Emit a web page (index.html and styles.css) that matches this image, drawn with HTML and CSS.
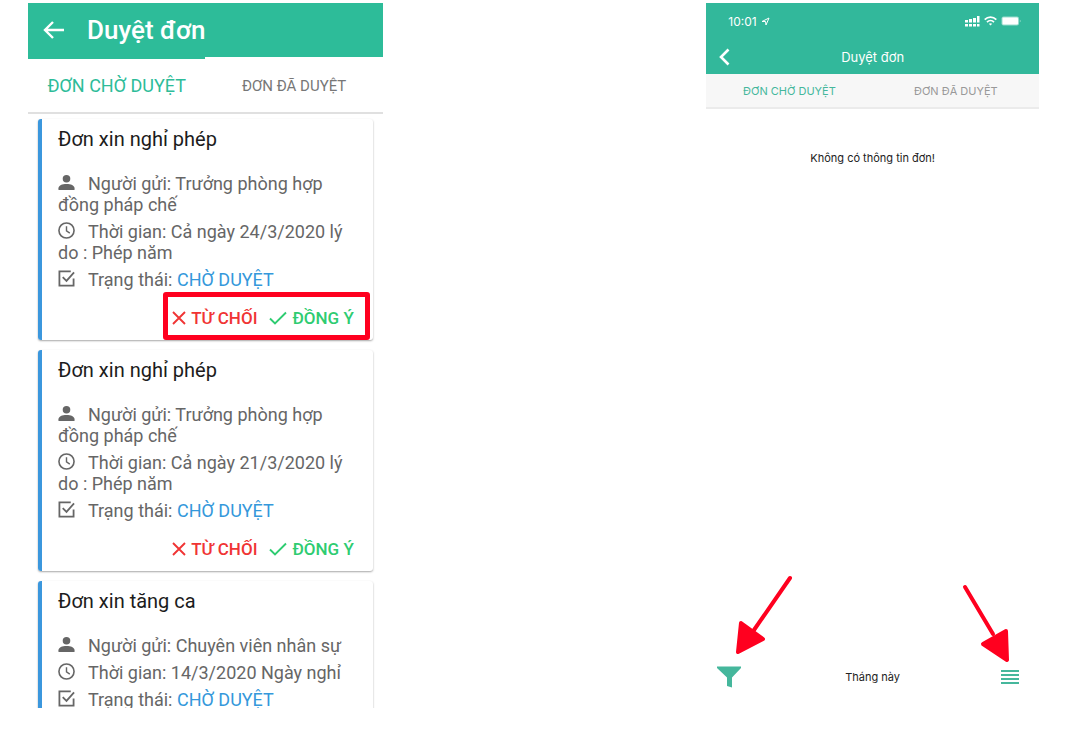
FILE: index.html
```html
<!DOCTYPE html>
<html lang="vi">
<head>
  <meta charset="UTF-8" />
  <meta name="viewport" content="width=device-width, initial-scale=1.0"/>
  <title>Duyệt đơn</title>
  <link rel="stylesheet" href="styles.css">
</head>
<body>
  <!-- Shared icons -->
  <svg class="icon-defs" width="0" height="0" aria-hidden="true">
    <symbol id="icon-user" viewBox="0 0 18 18">
      <circle cx="9" cy="5" r="4" fill="currentColor"/>
      <path d="M.5 17v-2c0-3 4-4.500 8.500-4.500s8.500 1.500 8.500 4.500v2z" fill="currentColor"/>
    </symbol>
    <symbol id="icon-clock" viewBox="0 0 18 18">
      <circle cx="9" cy="9" r="8" fill="none" stroke="currentColor" stroke-width="1.700"/>
      <path d="M9 4.500v5l3.500 2.200" fill="none" stroke="currentColor" stroke-width="1.500"/>
    </symbol>
    <symbol id="icon-checkbox" viewBox="0 0 18 18">
      <path d="M13.500 1.500H1.500v15h15V9" fill="none" stroke="currentColor" stroke-width="1.900"/>
      <path d="M5 7.500l4 4L17 2.500" fill="none" stroke="currentColor" stroke-width="1.900"/>
    </symbol>
    <symbol id="icon-close" viewBox="0 0 14 14">
      <path d="M1 1l12 12M13 1L1 13" fill="none" stroke="currentColor" stroke-width="1.900"/>
    </symbol>
    <symbol id="icon-check" viewBox="0 0 18 14">
      <path d="M1 7.500l5 5L17 1.500" fill="none" stroke="currentColor" stroke-width="1.900"/>
    </symbol>
  </svg>

  <main class="screens">
    <!-- Android -->
    <section class="phone android">
      <header class="app-bar">
        <button class="icon-btn" aria-label="Quay lại">
          <svg width="22" height="20" viewBox="0 0 22 20"><path d="M21 10H2M10 2L2 10l8 8" fill="none" stroke="#fff" stroke-width="2.400"/></svg>
        </button>
        <h1>Duyệt đơn</h1>
      </header>
      <nav class="tabs">
        <button class="tab active">ĐƠN CHỜ DUYỆT</button>
        <button class="tab">ĐƠN ĐÃ DUYỆT</button>
      </nav>

      <div class="card-list">
        <article class="card">
          <h2>Đơn xin nghỉ phép</h2>
          <p><svg class="icon"><use href="#icon-user"/></svg>Người gửi: Trưởng phòng hợp đồng pháp chế</p>
          <p><svg class="icon"><use href="#icon-clock"/></svg>Thời gian: Cả ngày 24/3/2020 lý do : Phép năm</p>
          <p><svg class="icon"><use href="#icon-checkbox"/></svg>Trạng thái: <span class="status">CHỜ DUYỆT</span></p>
          <div class="actions">
            <button class="reject"><svg width="14" height="14"><use href="#icon-close"/></svg>TỪ CHỐI</button>
            <button class="approve"><svg width="18" height="14"><use href="#icon-check"/></svg>ĐỒNG Ý</button>
            <span class="highlight"></span>
          </div>
        </article>

        <article class="card">
          <h2>Đơn xin nghỉ phép</h2>
          <p><svg class="icon"><use href="#icon-user"/></svg>Người gửi: Trưởng phòng hợp đồng pháp chế</p>
          <p><svg class="icon"><use href="#icon-clock"/></svg>Thời gian: Cả ngày 21/3/2020 lý do : Phép năm</p>
          <p><svg class="icon"><use href="#icon-checkbox"/></svg>Trạng thái: <span class="status">CHỜ DUYỆT</span></p>
          <div class="actions">
            <button class="reject"><svg width="14" height="14"><use href="#icon-close"/></svg>TỪ CHỐI</button>
            <button class="approve"><svg width="18" height="14"><use href="#icon-check"/></svg>ĐỒNG Ý</button>
          </div>
        </article>

        <article class="card">
          <h2>Đơn xin tăng ca</h2>
          <p><svg class="icon"><use href="#icon-user"/></svg>Người gửi: Chuyên viên nhân sự</p>
          <p><svg class="icon"><use href="#icon-clock"/></svg>Thời gian: 14/3/2020 Ngày nghỉ</p>
          <p><svg class="icon"><use href="#icon-checkbox"/></svg>Trạng thái: <span class="status">CHỜ DUYỆT</span></p>
        </article>
      </div>
    </section>

    <!-- iOS -->
    <section class="phone ios">
      <header class="ios-header">
        <div class="status-bar">
          <span class="time">10:01
            <svg width="9" height="9" viewBox="0 0 9 9"><path d="M1 4.500L8 1 5 8 4.500 4.500z" fill="none" stroke="#fff" stroke-width="1"/></svg>
          </span>
          <span class="signals">
            <svg width="15" height="11" viewBox="0 0 15 11" fill="#fff">
              <path d="M0 4h3v2.500H0zM4 3h3v3.500H4zM8 2h3v4.500H8zM12 0h2.500v6.500H12zM0 8h3v2.500H0zM4 8h3v2.500H4zM8 8h3v2.500H8zM12 8h2.500v2.500H12z"/>
            </svg>
            <svg width="13" height="10" viewBox="0 0 13 10" fill="none" stroke="#fff" stroke-width="1.700">
              <path d="M.7 3.700C4 .3 9 .3 12.300 3.700M3 6.200c2-2 5-2 7 0"/>
              <path d="M6.500 9.500L4.800 7.800q1.700-1.300 3.400 0z" fill="#fff" stroke="none"/>
            </svg>
            <svg width="20" height="10" viewBox="0 0 20 10">
              <rect x=".5" y=".5" width="17.500" height="9" rx="2" fill="#fff" fill-opacity=".5"/>
              <rect x="1.500" y="1.500" width="15.500" height="7" rx="1" fill="#fff"/>
              <path d="M18.800 3.500q1.600 1.500 0 3z" fill="#fff" fill-opacity=".6"/>
            </svg>
          </span>
        </div>
        <div class="nav-bar">
          <button class="icon-btn" aria-label="Quay lại">
            <svg width="11" height="18" viewBox="0 0 11 18"><path d="M9.500 1.500L2 9l7.500 7.500" fill="none" stroke="#fff" stroke-width="2.600"/></svg>
          </button>
          <h1>Duyệt đơn</h1>
        </div>
      </header>
      <nav class="tabs">
        <button class="tab active">ĐƠN CHỜ DUYỆT</button>
        <button class="tab">ĐƠN ĐÃ DUYỆT</button>
      </nav>

      <p class="empty">Không có thông tin đơn!</p>

      <footer class="filter-bar">
        <button class="icon-btn" aria-label="Bộ lọc">
          <svg width="24" height="22" viewBox="0 0 24 22"><path d="M0 .5h24v1.500l-9 9.500v10l-5-1.500v-8.500L0 2z" fill="#45b79c"/></svg>
          <svg class="arrow arrow-left" width="60" height="82" viewBox="0 0 60 82">
            <path d="M55 4L19 56" stroke="#ff001f" stroke-width="4" stroke-linecap="round"/>
            <path d="M6 49L28 65 3 78z" fill="#ff001f" stroke="#ff001f" stroke-width="4" stroke-linejoin="round"/>
          </svg>
        </button>
        <span>Tháng này</span>
        <button class="icon-btn" aria-label="Danh sách">
          <svg width="18" height="16" viewBox="0 0 18 16"><path d="M0 2h18M0 6h18M0 10h18M0 14h18" stroke="#45b79c" stroke-width="1.800"/></svg>
          <svg class="arrow arrow-right" width="50" height="80" viewBox="0 0 50 80">
            <path d="M4 4L32 51" stroke="#ff001f" stroke-width="4" stroke-linecap="round"/>
            <path d="M45 48L22 61 46 77z" fill="#ff001f" stroke="#ff001f" stroke-width="4" stroke-linejoin="round"/>
          </svg>
        </button>
      </footer>
    </section>
  </main>
</body>
</html>
```

FILE: styles.css
```css
* {
  box-sizing: border-box;
}

body {
  margin: 0;
  background-color: #fff;
  font-family: Roboto, sans-serif;
}

h1, h2, p {
  margin: 0;
  font-weight: 400;
}

button {
  padding: 0;
  border: none;
  background: none;
  font: inherit;
  color: inherit;
  cursor: pointer;
}

svg {
  display: block;
}

.icon-defs {
  position: absolute;
}

.screens {
  display: grid;
  grid-template-columns: 354fr 332fr;
  grid-template-rows: 100%;
  column-gap: 32%;
  height: 100vh;
  padding: 3px 38px 38px 28px;
}

.phone {
  display: flex;
  flex-direction: column;
  min-width: 0;
  overflow: hidden;
}

.icon-btn {
  position: relative;
  display: flex;
}

.tabs {
  display: flex;
  flex-shrink: 0;
}

.tab {
  flex: 1;
}

/* Android screen */
.app-bar {
  display: flex;
  flex-shrink: 0;
  align-items: center;
  gap: 22px;
  height: 54px;
  padding-left: 15px;
  background-color: #2dbc99;
  color: #fff;
}

.app-bar h1 {
  font-size: 26px;
  font-weight: 500;
}

.android .tabs {
  height: 57px;
  border-bottom: 2px solid #e0e0e0;
}

.android .tab {
  border-top: 2px solid transparent;
  font-size: 15px;
  color: #777;
}

.android .tab.active {
  border-top-color: #2dbc99;
  font-size: 18px;
  color: #2dbc99;
}

.card-list {
  display: flex;
  flex-direction: column;
  gap: 10px;
  padding: 5px 10px 0;
}

.card {
  flex-shrink: 0;
  min-height: 221px;
  padding: 6px 16px 8px;
  border-left: 4px solid #3b97dd;
  border-radius: 3px;
  box-shadow: 0 1px 2px rgba(0, 0, 0, 0.35);
}

.card h2 {
  margin-bottom: 20px;
  font-size: 20px;
  line-height: 28px;
  color: #1c1c1c;
}

.card p {
  margin-bottom: 6px;
  font-size: 18px;
  line-height: 21px;
  color: #666;
}

.card .icon {
  display: inline-block;
  width: 17px;
  height: 17px;
  margin-right: 13px;
  vertical-align: -1px;
}

.card .status {
  color: #3498db;
}

.actions {
  position: relative;
  display: flex;
  justify-content: flex-end;
  gap: 12px;
  padding: 12px 3px 0 0;
  font-size: 17px;
  font-weight: 500;
  line-height: 20px;
}

.actions button {
  display: flex;
  align-items: center;
  gap: 5px;
}

.reject {
  color: #f03434;
}

.approve {
  color: #2ecc71;
}

.highlight {
  position: absolute;
  top: -4px;
  right: -13px;
  width: 207px;
  height: 48px;
  border: 5px solid #ff001f;
  border-radius: 3px;
}

/* iOS screen */
.ios {
  font-family: Inter, sans-serif;
}

.ios-header {
  flex-shrink: 0;
  height: 71px;
  background-color: #32b89b;
  color: #fff;
}

.status-bar {
  display: flex;
  align-items: center;
  justify-content: space-between;
  height: 36px;
  padding: 0 18px 0 22px;
  font-size: 12px;
}

.time, .signals {
  display: flex;
  align-items: center;
  gap: 4px;
}

.nav-bar {
  display: grid;
  grid-template-columns: 1fr auto 1fr;
  align-items: center;
  height: 35px;
  padding: 0 13px;
}

.nav-bar h1 {
  font-size: 13px;
}

.ios .tabs {
  height: 35px;
  border-bottom: 2px solid #ebebeb;
  background-color: #f7f7f7;
  font-size: 11px;
  color: #999;
}

.ios .tab.active {
  color: #45b79c;
}

.empty {
  margin-top: 40px;
  font-size: 11px;
  line-height: 18px;
  text-align: center;
  color: #222;
}

.filter-bar {
  display: grid;
  flex-shrink: 0;
  grid-template-columns: 1fr auto 1fr;
  align-items: center;
  height: 62px;
  margin-top: auto;
  padding: 0 11px;
  font-size: 11px;
  color: #222;
}

.filter-bar .icon-btn:last-child {
  justify-self: end;
  margin-right: 9px;
}

.filter-bar .icon-btn:first-child {
  justify-self: start;
}

/* Pointers over the two bottom buttons */
.arrow {
  position: absolute;
}

.arrow-left {
  bottom: 32px;
  left: 18px;
}

.arrow-right {
  right: 8px;
  bottom: 22px;
}
```
